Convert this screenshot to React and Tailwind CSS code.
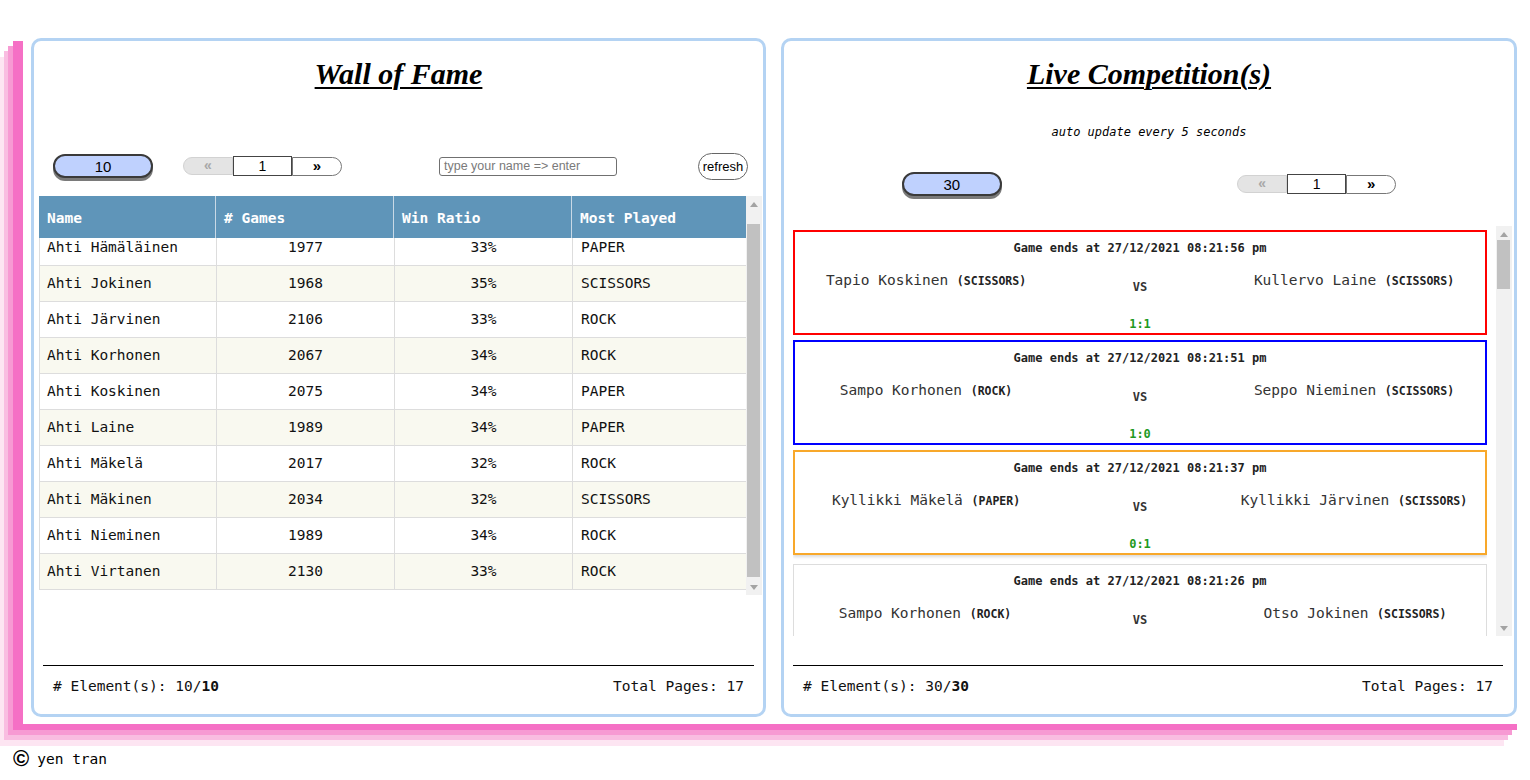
import React from "react";

const rows = [
  ["Ahti Hämäläinen", "1977", "33%", "PAPER"],
  ["Ahti Jokinen", "1968", "35%", "SCISSORS"],
  ["Ahti Järvinen", "2106", "33%", "ROCK"],
  ["Ahti Korhonen", "2067", "34%", "ROCK"],
  ["Ahti Koskinen", "2075", "34%", "PAPER"],
  ["Ahti Laine", "1989", "34%", "PAPER"],
  ["Ahti Mäkelä", "2017", "32%", "ROCK"],
  ["Ahti Mäkinen", "2034", "32%", "SCISSORS"],
  ["Ahti Nieminen", "1989", "34%", "ROCK"],
  ["Ahti Virtanen", "2130", "33%", "ROCK"],
];

const games = [
  { border: "border-2 border-[#ff0000]", time: "08:21:56", a: "Tapio Koskinen", ah: "SCISSORS", b: "Kullervo Laine", bh: "SCISSORS", score: "1:1" },
  { border: "border-2 border-[#0000ff]", time: "08:21:51", a: "Sampo Korhonen", ah: "ROCK", b: "Seppo Nieminen", bh: "SCISSORS", score: "1:0" },
  { border: "border-2 border-[#f8a82a] shadow-[0_2px_3px_rgba(0,0,0,0.15)]", time: "08:21:37", a: "Kyllikki Mäkelä", ah: "PAPER", b: "Kyllikki Järvinen", bh: "SCISSORS", score: "0:1" },
  { border: "border border-[#dddddd] mt-[4px]", time: "08:21:26", a: "Sampo Korhonen", ah: "ROCK", b: "Otso Jokinen", bh: "SCISSORS", score: "" },
];

function UpArrow() {
  return (
    <svg width="8" height="5" viewBox="0 0 8 5">
      <path d="M0 5 L4 0 L8 5 Z" fill="#a3a3a3" />
    </svg>
  );
}
function DownArrow() {
  return (
    <svg width="8" height="5" viewBox="0 0 8 5">
      <path d="M0 0 L8 0 L4 5 Z" fill="#a3a3a3" />
    </svg>
  );
}

function Scrollbar({ thumbTop, thumbHeight }) {
  return (
    <div className="w-[16px] h-full bg-[#f1f1f1] flex flex-col shrink-0">
      <div className="h-[16px] flex items-center justify-center shrink-0">
        <UpArrow />
      </div>
      <div className="flex-1 relative">
        <div
          className="absolute left-[1px] right-[2px] bg-[#c1c1c1]"
          style={{ top: thumbTop, height: thumbHeight }}
        />
      </div>
      <div className="h-[16px] flex items-center justify-center shrink-0">
        <DownArrow />
      </div>
    </div>
  );
}

function SizeSelect({ value }) {
  return (
    <div className="w-[100px] h-[24px] rounded-full border-2 border-[#3a3a3a] bg-[#bfd1fe] shadow-[0_3px_0_#7a7a7a] flex items-center justify-center font-['Liberation_Sans',sans-serif] text-[15px] text-black leading-none">
      {value}
    </div>
  );
}

function Pager() {
  return (
    <div className="flex items-center font-['Liberation_Sans',sans-serif]">
      <div className="w-[50px] h-[18px] rounded-l-full bg-[#e4e4e4] border border-[#d2d2d2] flex items-center justify-center text-[#a8a8a8] text-[14px] font-bold leading-none pb-[2px]">
        «
      </div>
      <div className="w-[59px] h-[20px] border border-[#444] bg-white flex items-center justify-center text-[14px] text-black leading-none">
        1
      </div>
      <div className="w-[50px] h-[19px] rounded-r-full bg-white border border-[#777] flex items-center justify-center text-black text-[15px] font-bold leading-none pb-[2px]">
        »
      </div>
    </div>
  );
}

function Footer({ count, right }) {
  return (
    <div className={`mt-auto ml-[9px] ${right ? "mr-[11px]" : "mr-[9px]"} border-t border-black h-[49px] pt-[10px] px-[10px] flex justify-between font-['DejaVu_Sans_Mono',monospace] text-[14.5px] leading-5 text-[#111]`}>
      <div>
        # Element(s): {count}/<span className="font-bold">{count}</span>
      </div>
      <div>Total Pages: 17</div>
    </div>
  );
}

function Title({ children }) {
  return (
    <div className="pt-[15px] h-[51px] text-center font-['Liberation_Serif',serif] italic font-bold text-[30px] leading-[36px] text-black">
      <span className="underline decoration-2 underline-offset-[3px]">{children}</span>
    </div>
  );
}

function WallOfFame() {
  return (
    <div className="w-[735px] h-[679px] rounded-[10px] border-[3px] border-[#b4d3f3] bg-white flex flex-col">
      <Title>Wall of Fame</Title>
      <div className="mt-[59px] h-[30px] flex items-center">
        <div className="ml-[19px]">
          <SizeSelect value="10" />
        </div>
        <div className="ml-[30px]">
          <Pager />
        </div>
        <div className="ml-[97px] w-[178px] h-[19px] border border-[#707070] rounded-[3px] flex items-center px-[4px] font-['Liberation_Sans',sans-serif] text-[12.5px] text-[#7a7a7a] leading-none">
          type your name =&gt; enter
        </div>
        <div className="ml-[81px] w-[50px] h-[27px] rounded-full border border-[#666] flex items-center justify-center font-['Liberation_Sans',sans-serif] text-[13px] text-black leading-none">
          refresh
        </div>
      </div>
      <div className="mt-[15px] ml-[5px] h-[399px] flex">
        <div className="w-[707px] h-full flex flex-col font-['DejaVu_Sans_Mono',monospace] text-[14.5px]">
          <div className="h-[42px] grid grid-cols-[177px_178px_178px_1fr] bg-[#5f95b9] text-white font-bold shrink-0">
            {["Name", "# Games", "Win Ratio", "Most Played"].map((h, i) => (
              <div
                key={h}
                className={`flex items-center px-[8px] pt-[3px] ${i < 3 ? "border-r border-[#c9d9e6]" : ""}`}
              >
                {h}
              </div>
            ))}
          </div>
          <div className="h-[357px] overflow-hidden">
            <div className="-mt-[8px]">
              {rows.map((r, i) => (
                <div
                  key={r[0]}
                  className={`h-[36px] grid grid-cols-[177px_178px_178px_1fr] border-b border-l border-[#dddddd] text-[#111] ${i % 2 === 1 ? "bg-[#f9f9f0]" : "bg-white"}`}
                >
                  <div className="flex items-center px-[7px] border-r border-[#dddddd]">{r[0]}</div>
                  <div className="flex items-center justify-center border-r border-[#dddddd]">{r[1]}</div>
                  <div className="flex items-center justify-center border-r border-[#dddddd]">{r[2]}</div>
                  <div className="flex items-center px-[8px]">{r[3]}</div>
                </div>
              ))}
            </div>
          </div>
        </div>
        <Scrollbar thumbTop={12} thumbHeight={353} />
      </div>
      <Footer count="10" />
    </div>
  );
}

function GameCard({ g }) {
  return (
    <div className={`h-[105px] shrink-0 bg-white ${g.border} pt-[8px] font-['DejaVu_Sans_Mono',monospace]`}>
      <div className="text-center text-[12px] leading-4 font-bold text-[#222]">
        Game ends at 27/12/2021 {g.time} pm
      </div>
      <div className="mt-[14px] grid grid-cols-[262px_1fr_262px] items-start">
        <div className="text-center text-[14.5px] leading-5 text-[#333] whitespace-nowrap">
          {g.a} <span className="text-[11.5px] font-bold text-[#222]">({g.ah})</span>
        </div>
        <div className="text-center text-[12px] font-bold leading-5 text-[#333] mt-[7px]">VS</div>
        <div className="text-center text-[14.5px] leading-5 text-[#333] whitespace-nowrap">
          {g.b} <span className="text-[11.5px] font-bold text-[#222]">({g.bh})</span>
        </div>
      </div>
      <div className="mt-[19px] text-center text-[12px] font-bold leading-4 text-[#1f9a1f]">{g.score}</div>
    </div>
  );
}

function LiveCompetition() {
  return (
    <div className="w-[736px] h-[679px] rounded-[10px] border-[3px] border-[#b4d3f3] bg-white flex flex-col">
      <Title>Live Competition(s)</Title>
      <div className="mt-[32px] h-[16px] text-center font-['DejaVu_Sans_Mono',monospace] italic text-[12px] leading-4 text-black">
        auto update every 5 seconds
      </div>
      <div className="mt-[29px] h-[30px] flex items-center justify-around">
        <SizeSelect value="30" />
        <Pager />
      </div>
      <div className="mt-[27px] ml-[9px] mr-[2px] h-[410px] flex">
        <div className="w-[694px] h-full overflow-hidden pt-[4px] flex flex-col gap-[5px]">
          {games.map((g, i) => (
            <GameCard key={i} g={g} />
          ))}
        </div>
        <div className="ml-[9px] h-full">
          <Scrollbar thumbTop={-2} thumbHeight={49} />
        </div>
      </div>
      <Footer count="30" right />
    </div>
  );
}

export default function App() {
  return (
    <div className="w-[1530px] h-[780px] bg-white overflow-hidden">
      <div className="pt-[35px] pl-[23px] pr-[3px]">
        <div className="h-[689px] bg-white flex gap-[15px] pl-[8px] pt-[3px] shadow-[-10px_6px_0_#f570c5,-15px_11px_0_#f79ad3,-19px_16px_0_#f9bde1,-23px_22px_0_#fde5f2]">
          <WallOfFame />
          <LiveCompetition />
        </div>
      </div>
      <div className="mt-[25px] ml-[13px] flex items-center font-['DejaVu_Sans_Mono',monospace] text-[14.5px] leading-5 text-black">
        <span className="font-['Liberation_Sans',sans-serif] text-[22px] font-bold leading-5 mr-[8px]">©</span>
        <span>yen tran</span>
      </div>
    </div>
  );
}
